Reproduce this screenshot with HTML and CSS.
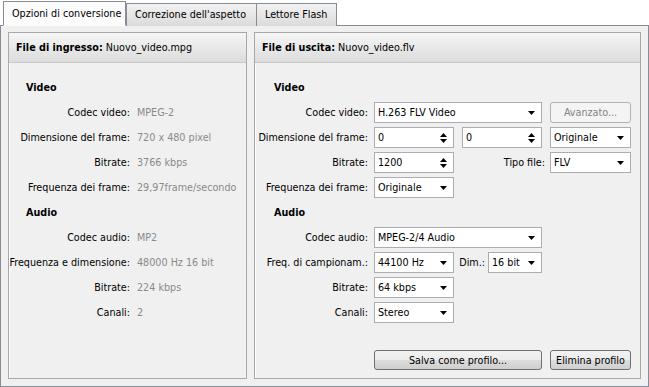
FILE: index.html
```html
<!DOCTYPE html>
<html lang="it">
<head>
<meta charset="utf-8">
<title>Opzioni di conversione</title>
<link rel="stylesheet" href="styles.css">
</head>
<body>
<div class="window">
  <div class="tabs">
    <div class="tab active">Opzioni di conversione</div>
    <div class="tab">Correzione dell'aspetto</div>
    <div class="tab">Lettore Flash</div>
  </div>
  <div class="pane">
    <section class="group group-in">
      <div class="ghead"><b>File di ingresso:</b> Nuovo_video.mpg</div>
      <div class="gbody">
        <div class="sec">Video</div>
        <div class="irow"><span class="ilbl">Codec video:</span><span class="ival">MPEG-2</span></div>
        <div class="irow"><span class="ilbl">Dimensione del frame:</span><span class="ival">720 x 480 pixel</span></div>
        <div class="irow"><span class="ilbl">Bitrate:</span><span class="ival">3766 kbps</span></div>
        <div class="irow"><span class="ilbl">Frequenza dei frame:</span><span class="ival">29,97frame/secondo</span></div>
        <div class="sec">Audio</div>
        <div class="irow"><span class="ilbl">Codec audio:</span><span class="ival">MP2</span></div>
        <div class="irow"><span class="ilbl">Frequenza e dimensione:</span><span class="ival">48000 Hz 16 bit</span></div>
        <div class="irow"><span class="ilbl">Bitrate:</span><span class="ival">224 kbps</span></div>
        <div class="irow"><span class="ilbl">Canali:</span><span class="ival">2</span></div>
      </div>
    </section>
    <section class="group group-out">
      <div class="ghead"><b>File di uscita:</b> Nuovo_video.flv</div>
      <div class="gbody obody">
        <div class="sec sec-out">Video</div>
        <div class="orow">
          <span class="olbl">Codec video:</span>
          <div class="combo w168"><span class="ctext">H.263 FLV Video</span><svg class="arr" width="7" height="4" viewBox="0 0 7 4"><path d="M0 0h7L3.5 4z"/></svg></div>
          <div class="btn btn-dis w81 ml8">Avanzato...</div>
        </div>
        <div class="orow">
          <span class="olbl">Dimensione del frame:</span>
          <div class="spin w80"><span class="ctext">0</span><svg class="sarr" width="7" height="10" viewBox="0 0 7 10"><path d="M3.5 0L7 4H0z M0 6h7L3.5 10z"/></svg></div>
          <div class="spin w80 ml8"><span class="ctext">0</span><svg class="sarr" width="7" height="10" viewBox="0 0 7 10"><path d="M3.5 0L7 4H0z M0 6h7L3.5 10z"/></svg></div>
          <div class="combo w81 ml8"><span class="ctext">Originale</span><svg class="arr" width="7" height="4" viewBox="0 0 7 4"><path d="M0 0h7L3.5 4z"/></svg></div>
        </div>
        <div class="orow">
          <span class="olbl">Bitrate:</span>
          <div class="spin w80"><span class="ctext">1200</span><svg class="sarr" width="7" height="10" viewBox="0 0 7 10"><path d="M3.5 0L7 4H0z M0 6h7L3.5 10z"/></svg></div>
          <span class="inl tipo">Tipo file:</span>
          <div class="combo w81"><span class="ctext">FLV</span><svg class="arr" width="7" height="4" viewBox="0 0 7 4"><path d="M0 0h7L3.5 4z"/></svg></div>
        </div>
        <div class="orow">
          <span class="olbl">Frequenza dei frame:</span>
          <div class="combo w80"><span class="ctext">Originale</span><svg class="arr" width="7" height="4" viewBox="0 0 7 4"><path d="M0 0h7L3.5 4z"/></svg></div>
        </div>
        <div class="sec sec-out">Audio</div>
        <div class="orow">
          <span class="olbl">Codec audio:</span>
          <div class="combo w168"><span class="ctext">MPEG-2/4 Audio</span><svg class="arr" width="7" height="4" viewBox="0 0 7 4"><path d="M0 0h7L3.5 4z"/></svg></div>
        </div>
        <div class="orow">
          <span class="olbl">Freq. di campionam.:</span>
          <div class="combo w80"><span class="ctext">44100 Hz</span><svg class="arr" width="7" height="4" viewBox="0 0 7 4"><path d="M0 0h7L3.5 4z"/></svg></div>
          <span class="inl dim">Dim.:</span>
          <div class="combo w54"><span class="ctext">16 bit</span><svg class="arr" width="7" height="4" viewBox="0 0 7 4"><path d="M0 0h7L3.5 4z"/></svg></div>
        </div>
        <div class="orow">
          <span class="olbl">Bitrate:</span>
          <div class="combo w80"><span class="ctext">64 kbps</span><svg class="arr" width="7" height="4" viewBox="0 0 7 4"><path d="M0 0h7L3.5 4z"/></svg></div>
        </div>
        <div class="orow">
          <span class="olbl">Canali:</span>
          <div class="combo w80"><span class="ctext">Stereo</span><svg class="arr" width="7" height="4" viewBox="0 0 7 4"><path d="M0 0h7L3.5 4z"/></svg></div>
        </div>
        <div class="foot">
          <div class="btn w168">Salva come profilo...</div>
          <div class="btn w81 ml8">Elimina profilo</div>
        </div>
      </div>
    </section>
  </div>
</div>
</body>
</html>
```

FILE: styles.css
```css
* { box-sizing: border-box; }
html, body { margin: 0; padding: 0; background: #ffffff; }
body {
  font-family: "DejaVu Sans Condensed", "DejaVu Sans", sans-serif;
  font-stretch: condensed;
  font-size: 10.7px;
  color: #000;
}
.window { width: 649px; height: 387px; display: flex; flex-direction: column; }

.tabs { height: 26px; display: flex; align-items: flex-end; padding-left: 3px; position: relative; z-index: 2; margin-bottom: -1px; }
.tab {
  height: 23px; padding: 0 8px; line-height: 21px;
  border: 1px solid #898c95; border-bottom: none;
  background: linear-gradient(#f2f2f2, #dbdbdb);
  margin-right: -1px; white-space: nowrap;
}
.tab:nth-child(2) { width: 131px; }
.tab:nth-child(3) { width: 81px; }
.tab.active {
  width: 123px; height: 25px; line-height: 23px;
  background: #fcfcfc; margin-right: 0;
  border-bottom: 1px solid #fcfcfc;
}

.pane {
  flex: 1; display: flex; gap: 7px;
  border: 1px solid #898c95;
  background: #f0f0f0;
  padding: 6px 7px 7px 7px;
}
.group {
  border: 1px solid #a8a8a8;
  box-shadow: inset 1px 1px 0 #ffffff;
  display: flex; flex-direction: column;
}
.group-in { width: 239px; }
.group-out { width: 387px; }
.ghead {
  height: 30px; line-height: 29px; padding-left: 7px;
  background: linear-gradient(#f6f6f6, #dcdcdc);
  border-bottom: 1px solid #c8c8c8;
  white-space: nowrap;
}
.gbody { flex: 1; padding-top: 12px; display: flex; flex-direction: column; }
.sec { height: 25px; line-height: 25px; font-weight: bold; padding-left: 17px; }
.irow { height: 25px; display: flex; align-items: center; white-space: nowrap; }
.ilbl { width: 121px; text-align: right; flex: none; }
.ival { margin-left: 7px; color: #8a8a8a; }

.sec-out { padding-left: 19px; }
.obody { padding-bottom: 8px; }
.orow { height: 25px; display: flex; align-items: center; white-space: nowrap; }
.olbl { width: 113px; text-align: right; margin-right: 6px; flex: none; }
.inl { text-align: right; flex: none; }
.tipo { width: 96px; padding-right: 5px; }
.dim { width: 34px; padding-right: 3px; }

.combo, .spin {
  height: 21px; background: #fff; border: 1px solid #abadb3;
  display: flex; align-items: center; padding: 0 6px 0 3px; flex: none;
}
.ctext { flex: 1; overflow: hidden; }
.arr { flex: none; }
.sarr { flex: none; }

.w168 { width: 168px; }
.w80 { width: 80px; }
.w81 { width: 81px; }
.w54 { width: 54px; }
.ml8 { margin-left: 8px; }

.btn {
  height: 20px; flex: none;
  border: 1px solid #707070; border-radius: 3px;
  background: linear-gradient(#f2f2f2 0%, #ebebeb 50%, #dddddd 51%, #cfcfcf 100%);
  display: flex; align-items: center; justify-content: center;
}
.btn-dis { height: 21px; border-color: #adb2b5; background: #f4f4f4; color: #838383; }
.foot { margin-top: auto; display: flex; padding-left: 119px; }
```
